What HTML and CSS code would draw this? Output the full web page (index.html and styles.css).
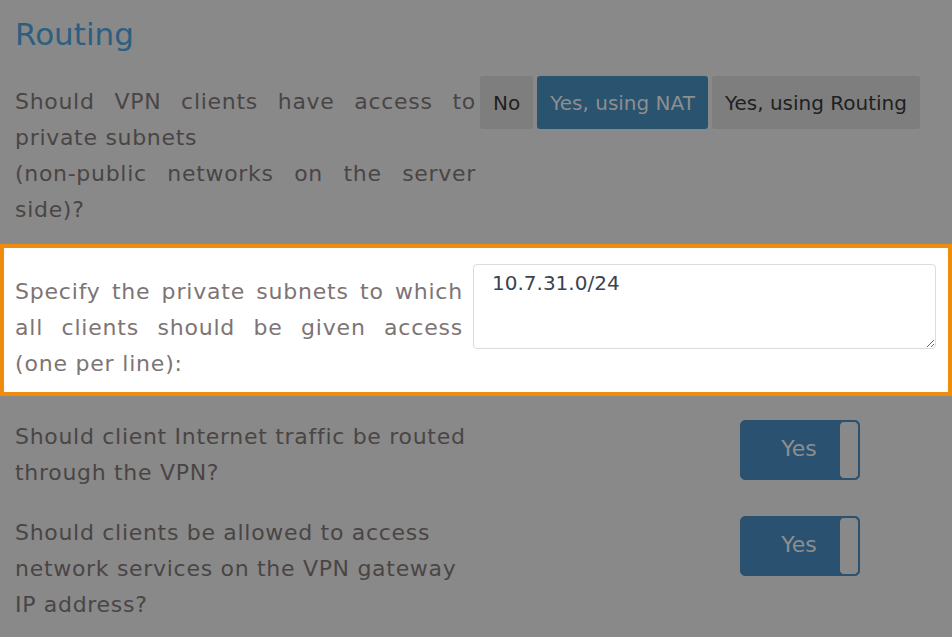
FILE: index.html
```html
<!DOCTYPE html>
<html>
    <head>
        <title>Routing</title>
        <meta charset="utf-8"/>
        <link rel="stylesheet" href="styles.css">
    </head>
    <body>
        <main>
            <h2>Routing</h2>

            <div class="row">
                <div class="question justify">Should VPN clients have access to private subnets<br>(non-public networks on the server side)?</div>
                <div class="choices">
                    <button>No</button>
                    <button class="active">Yes, using NAT</button>
                    <button>Yes, using Routing</button>
                </div>
            </div>

            <div class="row highlight">
                <label class="question justify" for="subnets">Specify the private subnets to which all clients should be given access (one per line):</label>
                <textarea id="subnets">10.7.31.0/24</textarea>
            </div>

            <div class="row toggle-row">
                <div class="question">Should client Internet traffic be routed through the VPN?</div>
                <div class="toggle"><span>Yes</span><i></i></div>
            </div>

            <div class="row toggle-row">
                <div class="question">Should clients be allowed to access network services on the VPN gateway IP address?</div>
                <div class="toggle"><span>Yes</span><i></i></div>
            </div>
        </main>
    </body>
</html>
```

FILE: styles.css
```css
* {
    box-sizing: border-box;
}
body, html {
    margin: 0;
    padding: 0;
    background: #898989;
    color: #4a4545;
    font-family: 'DejaVu Sans', sans-serif;
    font-size: 22px;
}
main {
    padding: 0 15px;
}
h2 {
    margin: 14px 0 22px;
    font-weight: 400;
    font-size: 31px;
    line-height: 40px;
    color: #2d5f80;
}

.row {
    display: flex;
    align-items: flex-start;
    line-height: 36px;
}
.question {
    width: 461px;
    flex: none;
    letter-spacing: 0.7px;
}
.justify {
    text-align: justify;
}
.row > .question {
    padding-top: 8px;
}

.choices {
    display: flex;
    gap: 4px;
    margin-left: 4px;
}
.choices button {
    font-family: inherit;
    font-size: 20px;
    color: #1f1f1f;
    background: #7e7e7e;
    border: 0;
    border-radius: 3px;
    height: 53px;
    padding: 0 13px;
}
.choices .active {
    background: #2a5370;
    color: #8e8e8e;
}

.highlight {
    margin: 16px -15px 23px;
    padding: 16px 12px 10px 11px;
    background: #fff;
    border: 4px solid #ef8c0c;
}
.highlight .question {
    width: 448px;
    margin-right: 10px;
    padding-top: 10px;
    color: #7d7474;
    letter-spacing: 0.8px;
}
.highlight textarea {
    flex: 1;
    height: 85px;
    font-family: inherit;
    font-size: 20px;
    color: #3a4450;
    border: 1px solid #dcdcdc;
    border-radius: 4px;
    padding: 6px 18px;
    resize: vertical;
}

.toggle-row {
    margin-bottom: 24px;
}
.toggle-row .question {
    width: 460px;
    padding-top: 0;
}
.toggle {
    display: flex;
    width: 120px;
    height: 60px;
    margin: 1px 0 0 265px;
    background: #2a5270;
    border: 1px solid #2a5270;
    border-radius: 5px;
    color: #8e8e8e;
}
.toggle span {
    flex: 1;
    padding-left: 18px;
    line-height: 56px;
    text-align: center;
}
.toggle i {
    width: 20px;
    background: #898989;
    border: 1px solid #2a5270;
    border-radius: 5px;
}
```
